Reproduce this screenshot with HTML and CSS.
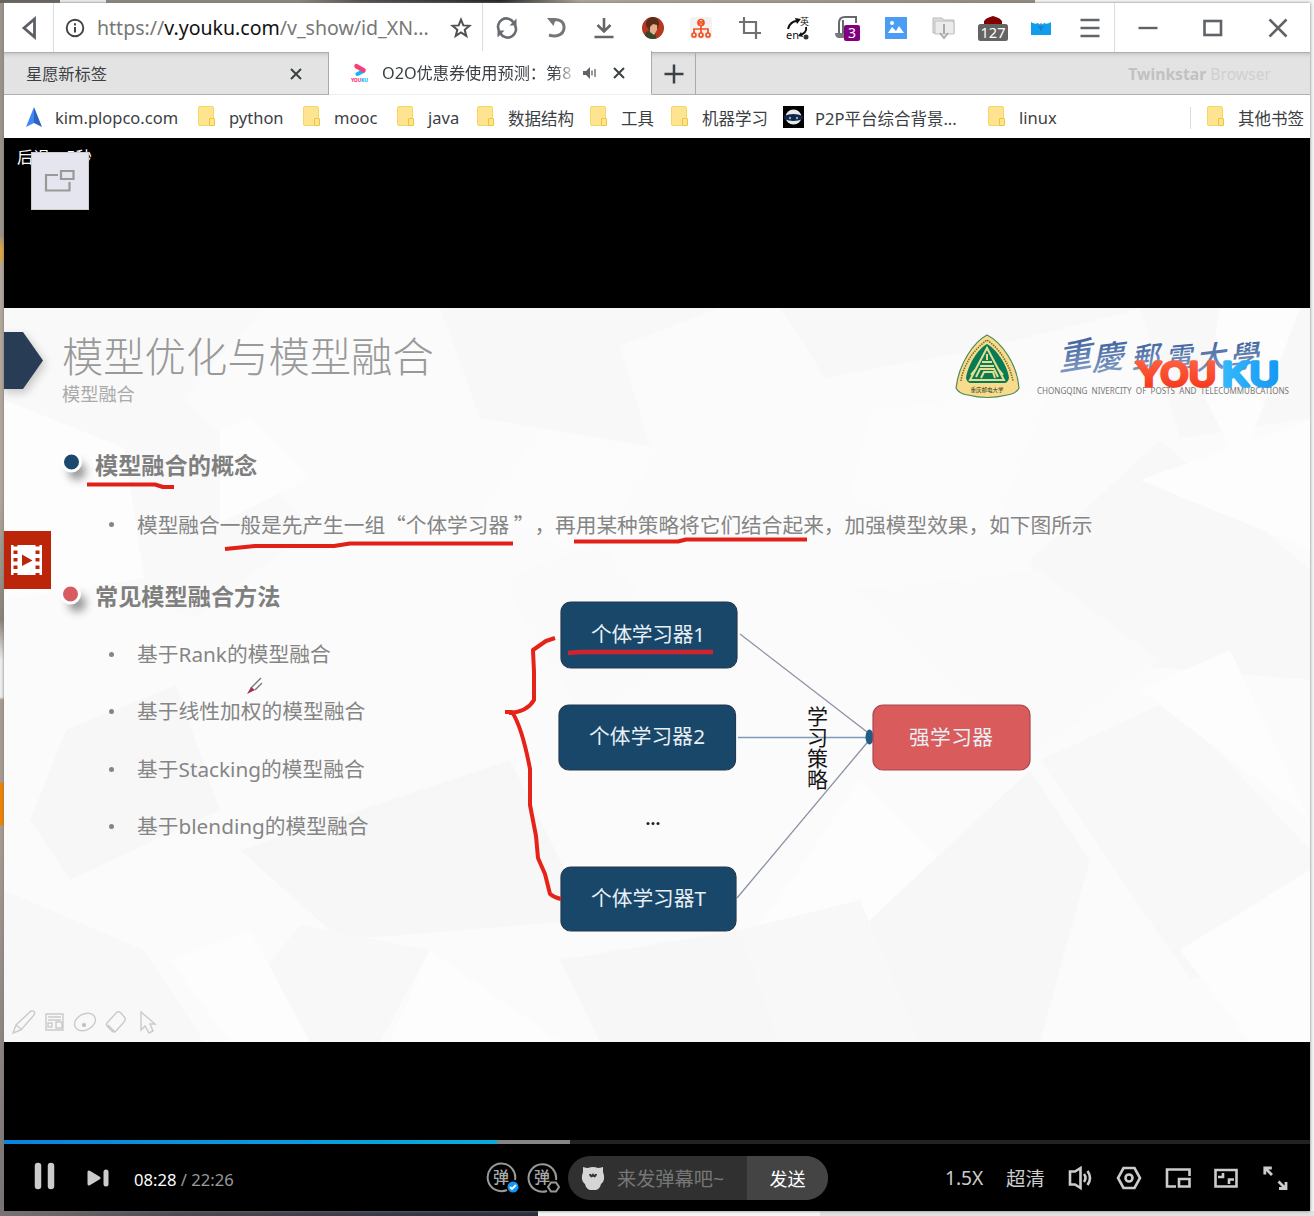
FILE: index.html
```html
<!DOCTYPE html>
<html lang="zh-CN">
<head>
<meta charset="utf-8">
<title>O2O优惠券使用预测</title>
<link rel="stylesheet" href="styles.css">
</head>
<body>
<div class="window">
  <header class="toolbar">
    <div class="back"><svg width="24" height="24" viewBox="0 0 24 24"><path d="M17.500 3V21L7 12Z" fill="none" stroke="#5b5f66" stroke-width="2.800"/></svg></div>
    <div class="address">
      <svg class="info" width="20" height="20" viewBox="0 0 20 20"><circle cx="10" cy="10" r="8.300" fill="none" stroke="#444" stroke-width="1.900"/><path d="M10 9v5.500M10 5.200v2.200" stroke="#444" stroke-width="2"/></svg>
      <span class="url">https://<b>v.youku.com</b>/v_show/id_XN...</span>
      <svg class="star" width="22" height="22" viewBox="0 0 22 22"><path d="M11 2.600l2.300 5.800 6.200.4-4.800 4 1.600 6.100-5.300-3.400-5.300 3.400 1.600-6.100-4.800-4 6.200-.4z" fill="none" stroke="#505050" stroke-width="2"/></svg>
    </div>
    <nav class="tools">
      <i><svg width="24" height="24" viewBox="0 0 24 24" fill="none" stroke="#686c70" stroke-width="2.600"><path d="M4.200 15A8.300 8.300 0 0 1 18.500 6.500M19.800 9A8.300 8.300 0 0 1 5.500 17.500"/><path d="M2 10.500l3 7 5-5zM22 13.500l-3-7-5 5z" fill="#686c70" stroke="none" transform="translate(-1 1) scale(.7)" opacity="0"/><path d="M14.500 9.500h7V2.500zM9.500 14.500h-7v7z" fill="#686c70" stroke="none"/></svg></i>
      <i><svg width="24" height="24" viewBox="0 0 24 24" fill="none" stroke="#74777a" stroke-width="3"><path d="M8 4.500c8-2.500 12.500 2 12 8-.8 6.500-8 9-15 6.500"/><path d="M3 2h9l-2.500 8z" fill="#74777a" stroke="none"/></svg></i>
      <i><svg width="24" height="24" viewBox="0 0 24 24" fill="none" stroke="#666" stroke-width="2.600"><path d="M12 2v13M5.500 9l6.500 6.500L18.500 9M2.500 21h19"/></svg></i>
      <i><svg width="24" height="24" viewBox="0 0 24 24"><defs><clipPath id="avatar"><circle cx="12" cy="12" r="11"/></clipPath></defs><g clip-path="url(#avatar)"><path fill="#b73720" d="M0 0h24v24H0z"/><path fill="#36482b" d="M2 24l3-8 5-2 4 3 2 7z"/><path fill="#e2b18d" d="M8 7h8v7l-3 5-4-3z"/><path fill="#5b2d19" d="M5 10c-1-12 14-12 13-1l-2 4V9l-4-1-3 3v4z"/></g></svg></i>
      <i><svg width="24" height="24" viewBox="0 0 24 24"><rect x="1" y="1" width="22" height="22" rx="3" fill="#f2f2f2"/><g fill="none" stroke="#f4511e" stroke-width="1.700"><circle cx="12" cy="6.500" r="3"/><path d="M9 5l6 3M15 5L9 8M12 9.500V17M5 17v-4h14v4"/><circle cx="5" cy="19" r="2"/><circle cx="12" cy="19" r="2"/><circle cx="19" cy="19" r="2"/></g></svg></i>
      <i><svg width="24" height="24" viewBox="0 0 24 24" fill="none" stroke="#6f7275" stroke-width="2.200"><path d="M1 6h17v17M6 1v16h17"/></svg></i>
      <i><svg width="26" height="26" viewBox="0 0 26 26"><path d="M3 14c1-5 5-8 9-8M21 12c1 4-2 7-6 8" fill="none" stroke="#111" stroke-width="2"/><path d="M10 3l6 1-4 5zM16 17l-3 4 5 1z" fill="#111"/><circle cx="21" cy="22" r="2.500" fill="#333"/><text x="1" y="24" class="mini-en">en</text><text x="15" y="10" class="mini-cn">英</text></svg></i>
      <i><svg width="28" height="28" viewBox="0 0 28 28"><path d="M6 22V9q0-6 6-6h11v6M10 6v14M12 3h11" fill="none" stroke="#66696c" stroke-width="2"/><path d="M2 19h9v5H5q-3-1-3-5z" fill="#77797b"/><rect x="11" y="11" width="16" height="16" rx="2" fill="#800080"/><text x="19" y="24.200" class="badge-three">3</text></svg></i>
      <i><svg width="24" height="24" viewBox="0 0 24 24"><path fill="#4a9cf5" d="M1 1h22v22H1z"/><path d="M4 17l4-6 4 4 3-5 5 7z" fill="#fff"/><circle cx="8" cy="7" r="2" fill="#fff"/></svg></i>
      <i><svg width="24" height="24" viewBox="0 0 24 24"><path d="M1 2h9l2 2h10v13H1z" fill="#dedede" stroke="#b8b8b8"/><path d="M3 5h17l2 2v11H3z" fill="#ebebeb" stroke="#c0c0c0"/><path d="M12 8v10M8 17l4 5 4-5" fill="none" stroke="#aaa" stroke-width="2"/></svg></i>
      <i><svg width="32" height="28" viewBox="0 0 32 28"><path d="M7 10V7q2-3 6-4l3-1 3 1q4 1 6 4v3z" fill="#820000"/><rect x="1" y="10" width="30" height="17" rx="2.500" fill="#646464"/><text x="16" y="24" class="badge-count">127</text></svg></i>
      <i><svg width="22" height="22" viewBox="0 0 22 22"><path d="M1 5q4 3 7 1 3 3 6 0 3 2 7-1v13H1z" fill="#109deb"/><path d="M11 6v8M8 9l3 3 3-3" fill="none" stroke="#2272b0"/></svg></i>
      <i><svg width="22" height="22" viewBox="0 0 22 22"><path d="M1.500 3h19M1.500 11h19M1.500 19h19" stroke="#626569" stroke-width="2.300"/></svg></i>
    </nav>
    <div class="controls-win">
      <i><svg width="22" height="22" viewBox="0 0 22 22"><path d="M1.500 11h19" stroke="#5f6368" stroke-width="2.400"/></svg></i>
      <i><svg width="22" height="22" viewBox="0 0 22 22"><rect x="2.500" y="4" width="16.500" height="14" fill="none" stroke="#5f6368" stroke-width="2.600"/></svg></i>
      <i><svg width="22" height="22" viewBox="0 0 22 22"><path d="M2.500 2.500l17 17M19.500 2.500l-17 17" stroke="#5f6368" stroke-width="2.500"/></svg></i>
    </div>
  </header>

  <div class="tabs">
    <div class="tab"><span>星愿新标签</span><svg width="14" height="14" viewBox="0 0 14 14"><path d="M2 2l10 10M12 2L2 12" stroke="#3c4043" stroke-width="2"/></svg></div>
    <div class="tab active">
      <svg class="fav" width="18" height="20" viewBox="0 0 18 20"><path d="M12.500 8l-6 3" stroke="#10b7f5" stroke-width="4" stroke-linecap="round"/><path d="M5.500 3.200l7 4" stroke="#ff3b78" stroke-width="4.500" stroke-linecap="round"/><text x="0" y="19" class="fav-text" textLength="17">YOU<tspan fill="#10b7f5">KU</tspan></text></svg>
      <span class="tab-title">O2O优惠券使用预测：第8</span>
      <svg class="sound" width="16" height="14" viewBox="0 0 16 14"><path d="M1 5h3l4-4v12L4 9H1z" fill="#5f6368"/><path d="M10 4.500v5M13 3v8" stroke="#5f6368" stroke-width="1.300"/></svg>
      <svg width="14" height="14" viewBox="0 0 14 14"><path d="M2 2l10 10M12 2L2 12" stroke="#3c4043" stroke-width="2"/></svg>
    </div>
    <div class="newtab"><svg width="20" height="20" viewBox="0 0 20 20"><path d="M10 .5v19M.5 10h19" stroke="#3c4043" stroke-width="2.500"/></svg></div>
    <div class="brand"><b>Twinkstar</b> Browser</div>
  </div>

  <nav class="bookmarks">
    <a style="width:143px"><svg class="bm" width="18" height="20" viewBox="0 0 18 20"><path d="M9 0l8 20-8-4z" fill="#2d64c0"/><path d="M9 0L1 20l8-4z" fill="#3f87f5"/></svg>kim.plopco.com</a>
    <a class="folder" style="width:75px"><s></s>python</a>
    <a class="folder" style="width:64px"><s></s>mooc</a>
    <a class="folder" style="width:50px"><s></s>java</a>
    <a class="folder" style="width:83px"><s></s>数据结构</a>
    <a class="folder" style="width:51px"><s></s>工具</a>
    <a class="folder" style="width:82px"><s></s>机器学习</a>
    <a class="robot" style="width:175px"><svg class="bm" width="21" height="22" viewBox="0 0 21 22"><path d="M0 0h21v22H0z" fill="#000"/><ellipse cx="10.500" cy="11" rx="8" ry="7.500" fill="#e7e9ee"/><path d="M1 10q9-4 19 0v3q-10 4-19 0z" fill="#152541"/><circle cx="7" cy="12" r="1.200" fill="#5ab5ff"/><circle cx="14" cy="12" r="1.200" fill="#5ab5ff"/></svg>P2P平台综合背景...</a>
    <a class="folder"><s></s>linux</a>
    <a class="folder other"><s></s>其他书签</a>
  </nav>

  <main class="player">
    <div class="toast">后退：5秒</div>
    <div class="popout"><svg width="32" height="24" viewBox="0 0 32 24" fill="none" stroke="#999" stroke-width="2.200"><path d="M14 6H2v15.500H25.500V13"/><path d="M17 2h12.500v8H17z"/></svg></div>
    <section class="slide">
      <svg class="facets" viewBox="4 308 1306 734">
        <path fill="#f9f9f9" d="M4 308h260l-80 90 130 130-120 90L4 540z"/>
        <path fill="#fff" d="M4 400l120 48 20 130L4 600zM220 430l30-12 60 60-90 45z"/>
        <path fill="#f7f7f7" d="M440 308l40 110 170 28-30-100 100-38zM780 308l45 70 160-30 160-40z"/>
        <path fill="#fdfdfd" d="M540 430l120 20-70 110-110-50zM870 410l180-20-60 150-140-40z"/>
        <path fill="#f6f6f6" d="M1030 560l130-120 150 130v110l-240-20zM1140 308h170v110l-130 20z"/>
        <path fill="#fff" d="M1220 308h80l-60 160-35-70zM1140 480l170-60v130z"/>
        <path fill="#f5f5f5" d="M66 730l110-45 44 125-150 70-40-60zM240 850l270-90 80 160-250 20z"/>
        <path fill="#fafafa" d="M500 580l100-40 80 110-90 80zM850 590l190-20 120 90-130 100z"/>
        <path fill="#f6f6f6" d="M4 890l140 60 60 92H4zM300 925l130 25-50 92h-70l-80-30z"/>
        <path fill="#fff" d="M430 950l130 92H390zM860 780l80 80-80 100-110-20zM170 960l80-30 60 112H230z"/>
        <path fill="#f4f4f4" d="M560 960l180-30 40 112H600zM870 920l160-150 60 90-50 182H890z"/>
        <path fill="#f7f7f7" d="M1040 760l130-60 140 150v100l-120 30zM740 930l120-30 60 142H780z"/>
        <path fill="#fff" d="M1140 690l90-40 80 170zM1180 950l130-80v172h-60z"/>
      </svg>
      <div class="slide-head">
        <h1>模型优化与模型融合</h1>
        <p>模型融合</p>
      </div>
      <h2 class="first">模型融合的概念</h2>
      <ul class="concept"><li>模型融合一般是先产生一组“个体学习器 ”，再用某种策略将它们结合起来，加强模型效果，如下图所示</li></ul>
      <h2 class="second">常见模型融合方法</h2>
      <ul><li>基于Rank的模型融合</li><li>基于线性加权的模型融合</li><li>基于Stacking的模型融合</li><li>基于blending的模型融合</li></ul>

      <svg class="canvas" viewBox="4 308 1306 734">
        <defs>
          <linearGradient id="ink" x2="0" y2="1"><stop stop-color="#2f5596"/><stop offset="1" stop-color="#8ba3c8"/></linearGradient>
          <linearGradient id="red" x2="0" y2="1"><stop stop-color="#ff6a48"/><stop offset="1" stop-color="#f53016"/></linearGradient>
          <linearGradient id="blue" x2="1" y2="0"><stop stop-color="#35b9fa"/><stop offset="1" stop-color="#1598f4"/></linearGradient>
          <filter id="soft" x="-50%" y="-50%" width="200%" height="200%"><feGaussianBlur stdDeviation="4"/></filter>
        </defs>
        <path d="M4 336h22l20 28-20 29H4z" fill="#999" opacity=".5" filter="url(#soft)"/>
        <path d="M4 332h19l20 28.500L23 389H4z" fill="#293c55"/>
        <g filter="url(#soft)" fill="#555" opacity=".6"><ellipse cx="77" cy="471" rx="9" ry="9"/><ellipse cx="77" cy="603" rx="9" ry="9"/></g>
        <circle cx="71.500" cy="462" r="9" fill="#1b486c" stroke="#fff" stroke-width="3"/>
        <circle cx="70.500" cy="594" r="9" fill="#d95b61" stroke="#fff" stroke-width="3"/>

        <g>
          <path d="M987 335C974 342 959 363 956 388q3 6 12 7 19 5 39 0 9-1 12-7C1017 363 1001 342 987 335z" fill="#f6dc8c" stroke="#4d8b52" stroke-width="1.200"/>
          <path d="M987 344c-9 5-19 20-21 34q1 5 5 5h33q4 0 5-5c-2-14-13-29-22-34z" fill="#087a54"/>
          <path d="M961 381c2-15 12-31 26-41 14 10 23 26 26 41" fill="none" stroke="#7b6a37" stroke-width="1.600" stroke-dasharray="1.500 1"/>
          <path d="M987 348l-17 32h34zM987 354v6M980 366h14M982 362h10M976 377l4-8h14l4 8M981 378l3-6h9l2 6M971 375l5-6M1003 375l-5-6" fill="none" stroke="#e6dd92" stroke-width="2"/>
          <text x="987" y="391.500" class="seal-text">重庆邮电大学</text>
        </g>
        <g class="calligraphy" fill="url(#ink)">
          <text transform="translate(1059 371) rotate(-9) skewX(-18)" font-size="34">重</text>
          <text transform="translate(1092 371) rotate(-7) skewX(-18)" font-size="32">慶</text>
          <text transform="translate(1132 369) rotate(-7) skewX(-16)" font-size="28">郵</text>
          <text transform="translate(1166 368) rotate(-5) skewX(-14)" font-size="27">電</text>
          <text transform="translate(1196 370) rotate(-7) skewX(-18)" font-size="30">大</text>
          <text transform="translate(1230 369) rotate(-6) skewX(-14)" font-size="30">學</text>
        </g>
        <text x="1037" y="394" class="university" textLength="252" lengthAdjust="spacingAndGlyphs" xml:space="preserve">CHONGQING  NIVERCITY  OF  POSTS  AND  TELECOMMUBCATIONS</text>
        <g class="youku"><text x="1136" y="386" textLength="80" lengthAdjust="spacingAndGlyphs" fill="url(#red)" stroke="url(#red)">YOU</text><text x="1222" y="386" textLength="57" lengthAdjust="spacingAndGlyphs" fill="url(#blue)" stroke="url(#blue)">KU</text></g>

        <g fill="none" stroke="#8a91a4" stroke-width="1.300"><path d="M740 634l131 101"/><path d="M738 737.500h131" stroke="#7e9ab8"/><path d="M737 898l134-160"/></g>
        <ellipse cx="869.500" cy="737" rx="4" ry="7.500" fill="#225b86"/>
        <g fill="#19476a" stroke="#24394f" stroke-width="1.200"><rect x="561" y="602" width="176" height="66" rx="10"/><rect x="559" y="705" width="176.500" height="65" rx="10"/><rect x="561" y="867" width="175" height="64" rx="10"/></g>
        <rect x="873" y="705" width="157" height="65" rx="10" fill="#da5b5b" stroke="#a74850" stroke-width="1.200"/>
        <g class="node"><text x="591" y="642" textLength="114">个体学习器1</text><text x="589" y="744" textLength="116">个体学习器2</text><text x="591" y="906" textLength="115">个体学习器T</text><text x="909" y="744.500" textLength="84">强学习器</text></g>
        <g class="vertical"><text x="807" y="724">学</text><text x="807" y="745">习</text><text x="807" y="765.500">策</text><text x="807" y="786.500">略</text></g>
        <g fill="#222"><circle cx="648" cy="823.500" r="1.500"/><circle cx="653" cy="823.500" r="1.500"/><circle cx="658" cy="823.500" r="1.500"/></g>

        <g fill="none" stroke="#e12018" stroke-width="4" stroke-linejoin="round">
          <path d="M87 484.500h68l8 2.500h11"/>
          <path d="M225 549l15-1.500 15-1.500h79l16-2.500h163"/>
          <path d="M574 541.500h104l8-2h121"/>
          <path d="M568 653l12-1h133" stroke="#cf2430" stroke-width="4.500"/>
          <path d="M555 638l-9 3-13 9 1 22v28q-7 12-25 13M505 712h7q10 15 18 57v36l6 31 2 22 7 16 5 20q5 4 11 5" stroke="#e62318"/>
        </g>
        <path d="M251 688l10-10M255 690l7-7" fill="none" stroke="#777" stroke-width="1.400"/><path d="M247 694l4-7 4 3z" fill="#a72e4c"/>
        <g fill="none" stroke="#cacaca" stroke-width="1.400"><path d="M13 1033l3-8 15-14q5-1 3 4l-13 15zM16 1025l5 4"/><path d="M46 1014h17v16H46zM48 1017h13M48 1020h13M48 1023h4v4h-4zM56 1022h6v6h-6z"/><ellipse cx="85" cy="1022" rx="11" ry="8" transform="rotate(-27 85 1022)"/><circle cx="84" cy="1025" r="1.500" fill="#aaa"/><path d="M107 1023l10-11q2-1 4 1l4 5q1 2-1 4l-8 9q-2 2-4 0l-5-5q-1-2 0-3zM108 1025l7 7"/><path d="M141 1012v18l4-4 4 7 4-2-3-7h5z"/></g>
      </svg>
    </section>
    <div class="video-side"><svg width="31" height="30" viewBox="0 0 31 30"><path d="M0 0h31v30H0z" fill="#fff"/><path d="M11 9.500l10.500 6L11 21z" fill="#bd250b"/><path d="M4.500 -2v32M26.500 -2v32" stroke="#bd250b" stroke-width="4" stroke-dasharray="3.500 4"/></svg></div>
    <footer class="bar">
      <div class="progress"><div class="buffered" style="width:566px"></div><div class="played" style="width:493px"></div></div>
      <div class="buttons">
        <svg class="pause" width="22" height="28" viewBox="0 0 22 28"><path d="M5 4v20M18 4v20" stroke="#ccc" stroke-width="6.500" stroke-linecap="round"/></svg>
        <svg class="next" width="24" height="20" viewBox="0 0 24 20"><path d="M3 4v12l10-6z" fill="#ccc" stroke="#ccc" stroke-width="3" stroke-linejoin="round"/><path d="M20 4v12" stroke="#ccc" stroke-width="5" stroke-linecap="round"/></svg>
        <span class="time"><b>08:28</b> / 22:26</span>
        <svg class="dan" width="34" height="34" viewBox="0 0 34 34"><path d="M29 19A13.800 13.800 0 1 0 21 29" fill="none" stroke="#999" stroke-width="2"/><text x="15" y="22" class="dan-text">弹</text><circle cx="27" cy="26" r="5.500" fill="#1394f7"/><path d="M24 26l2 2 4-4" fill="none" stroke="#fff" stroke-width="1.800"/></svg>
        <svg class="dan" width="34" height="34" viewBox="0 0 34 34"><path d="M29 19A13.800 13.800 0 1 0 20 30" fill="none" stroke="#999" stroke-width="2"/><text x="15" y="22" class="dan-text">弹</text><path d="M24 21.500h5l3 4.500-3 4.500h-5L21 26z" fill="#000" stroke="#999" stroke-width="2"/></svg>
        <div class="comment"><svg width="24" height="26" viewBox="0 0 24 26"><path d="M2 2q3 1 5 1 5-2 10 0 2 0 5-1v5q3 8-2 12-1 5-5 6h-6q-4-1-5-6-5-4-2-12z" fill="#d5d5d5"/><path d="M9 9q1 4 3 1 2 3 3-1" fill="none" stroke="#333" stroke-width="2.200"/></svg><span>来发弹幕吧~</span><b>发送</b></div>
        <span class="speed">1.5X</span><span class="quality">超清</span>
        <div class="player-tools">
          <svg width="26" height="26" viewBox="0 0 26 26"><path d="M3 6.500h5L13.500 3v20L8 19.500H3z"/><path d="M17 9q3 4 0 8M20.500 6q5 7 0 14"/></svg>
          <svg width="26" height="26" viewBox="0 0 26 26"><path d="M7.500 3h11L24 13l-5.500 10h-11L2 13z"/><circle cx="13" cy="13" r="3.500"/></svg>
          <svg width="26" height="26" viewBox="0 0 26 26"><path d="M24.500 11V4.500H2v17h9M14 14h10.500v7.500H14z"/></svg>
          <svg width="26" height="26" viewBox="0 0 26 26"><path d="M2.500 5h21v16.500h-21zM5 12h5V8M21 14.500h-5v4.500"/></svg>
          <svg width="26" height="26" viewBox="0 0 26 26"><path d="M10 10L4 4M2.800 9.500V3h7M16.500 16.500l6 6M24 17v6.500h-7" stroke-width="2.800"/></svg>
        </div>
      </div>
    </footer>
  </main>
</div>
</body>
</html>
```

FILE: styles.css
```css
* { box-sizing: border-box; }
body {
  margin: 0; width: 1314px; height: 1216px; overflow: hidden; padding: 3px 4px 5px;
  font-family: "Noto Sans", "Noto Sans CJK SC", sans-serif; color: #3c4043;
  background:
    linear-gradient(90deg, #69635d 0 60px, #eee 60px 106px, #8c857d 106px 300px, #554f4c 360px, #222 500px, #b0a797 580px, #938b7e 1035px, #f6f6f6 1035px) 0 0 / 100% 3px no-repeat,
    linear-gradient(90deg, #787273 0, #4a4951 180px, #292d3a 538px, #f5f5f5 538px 820px, #e2e2e2 820px) 0 100% / 100% 5px no-repeat,
    linear-gradient(#9c938b 0 235px, #dda640 248px 258px, #b1a79b 265px 500px, #8b8178 620px, #eee 660px 697px, #a79c92 700px 782px, #f28300 783px 825px, #a99d92 826px, #777173) 0 0 / 4px 100% no-repeat,
    #f4f4f4;
}
.window { width: 1306px; height: 1208px; background: #fff; display: flex; flex-direction: column; box-shadow: 0 0 3px #777; }
svg { flex: none; }
i, .toolbar, .back, .address, .tools, .controls-win, .tabs, .tab, .bookmarks, .bookmarks a { display: flex; align-items: center; }
i { flex: 1; justify-content: center; font-style: normal; min-width: 0; }
.toolbar { height: 49px; }
.back { width: 50px; height: 100%; justify-content: center; border-right: 1px solid #ddd; }
.address { width: 429px; height: 100%; border-right: 1px solid #ddd; padding: 0 10px 0 11px; }
.url { margin-left: 12px; flex: 1; font-size: 19.550px; color: #777; white-space: nowrap; }
.url b { color: #111; font-weight: 400; }
.tools { flex: 1; height: 100%; border-right: 1px solid #ddd; }
.controls-win { width: 195px; }
.mini-en { font-size: 11px; fill: #111; }
.mini-cn { font-size: 9px; fill: #111; }
.badge-three { font-size: 14px; fill: #fff; text-anchor: middle; }
.badge-count { font-size: 14.500px; fill: #fff; text-anchor: middle; }

.tabs { height: 43px; background: #e3e3e3; border-top: 1px solid #b0b0b0; border-bottom: 1px solid #b0b0b0; box-shadow: inset 0 4px 4px -3px #bbb; }
.tab { width: 325px; height: 43px; border-right: 1px solid #aaa; padding: 0 25px 0 22px; justify-content: space-between; font-size: 16.200px; flex: none; }
.tab > span { position: relative; top: -1px; }
.tab.active { width: 323px; background: #fff; padding: 0 24px 0 22px; margin-top: -1px; justify-content: flex-start; border-bottom: 1px solid #eee; height: 44px; }
.tab-title { width: 191px; margin-left: 13px; white-space: nowrap; overflow: hidden; -webkit-mask-image: linear-gradient(90deg, #000 172px, #0004 190px); }
.sound { margin: 0 14px 0 9px; }
.fav-text { font: 800 5px "Noto Sans", sans-serif; fill: #ff3b78; }
.newtab { width: 44px; height: 42px; border-right: 1px solid #aaa; display: flex; align-items: center; justify-content: center; }
.brand { margin-left: auto; margin-right: 39px; font-size: 15.700px; color: #d0d0d0; }
.brand b { color: #c1c1c1; }

.bookmarks { height: 43px; font-size: 16.500px; padding-left: 21px; white-space: nowrap; padding-top: 2px; }
.bookmarks a { height: 30px; margin-right: 30px; flex: none; }
.bm { margin-right: 12px; margin-top: -2px; }
.robot .bm { margin-right: 11px; }
.bookmarks s { flex: none; width: 16px; height: 20px; margin-top: -3px; margin-right: 15px; background: #fee491; border: 1px solid #f7d761; border-radius: 2px; position: relative; }
.bookmarks s::after { content: ""; position: absolute; right: -2px; bottom: -1px; width: 4px; height: 6px; background: #fee491; border: 1px solid #efc63a; border-radius: 1px; }
.bookmarks .other { margin-left: auto; margin-right: 6px; border-left: 1px solid #ddd; padding-left: 16px; height: 22px; }

.player { height: 1073px; background: #000; position: relative; display: flex; flex-direction: column; }
.toast { position: absolute; left: 13px; top: 8px; font-size: 16.400px; line-height: 22px; color: #fff; }
.popout { position: absolute; left: 27px; top: 14px; width: 58px; height: 58px; background: #e5e5ef; border: 1px solid #ccc; display: flex; align-items: center; justify-content: center; }
.slide { margin-top: 170px; height: 734px; background: #fbfbfb; position: relative; color: #858585; }
.facets, .canvas { position: absolute; inset: 0; width: 1306px; height: 734px; }
.facets { opacity: .5; }
.slide-head, .slide h2, .slide ul { position: relative; }
.slide-head { padding: 18px 0 0 58px; }
.slide h1 { margin: 0; font-size: 41.300px; line-height: 60px; font-weight: 300; color: #999; }
.slide-head p { margin: 0; font-size: 18.200px; line-height: 16px; color: #aaa; }
.slide h2 { margin: 0 0 0 91px; font-size: 23.200px; line-height: 30px; color: #7f7f7f; }
.slide h2.first { margin-top: 48px; }
.slide h2.second { margin-top: 27px; }
.slide ul { list-style: none; margin: 0; padding: 16px 0 0 107px; font-size: 20.750px; line-height: 57.500px; white-space: nowrap; }
.slide h2.second + ul { padding-top: 15px; }
.slide li { display: flex; align-items: center; height: 57.500px; }
.slide li::before { content: ""; width: 5px; height: 5px; border-radius: 50%; background: #858585; margin-right: 23px; margin-left: -2px; }
.slide ul.concept { font-family: "Noto Sans CJK SC", sans-serif; text-spacing-trim: space-all; font-size: 20.680px; }
.seal-text { font-size: 5.500px; text-anchor: middle; fill: #26331c; }
.calligraphy { font-family: "Noto Sans CJK TC", sans-serif; font-weight: 500; }
.university { font: 9px "Noto Sans", sans-serif; fill: #777; }
.youku { font: 500 33px "Inter", sans-serif; stroke-width: 3.5px; stroke-linejoin: round; }
.node { font-size: 20.700px; fill: #e8eff5; }
.vertical { font-size: 21px; fill: #151515; }

.video-side { position: absolute; left: 0; top: 393px; width: 47px; height: 58px; background: #bd250b; display: flex; align-items: center; padding-left: 7px; }
.bar { margin-top: 98px; height: 71px; }
.progress { height: 4px; background: #222; display: grid; }
.buffered, .played { grid-area: 1 / 1; height: 4px; }
.buffered { background: #858585; }
.played { background: linear-gradient(90deg, #0a83dd, #08addc); }
.buttons { display: flex; align-items: center; height: 67px; color: #ccc; }
.pause { margin-left: 29px; margin-top: -3px; }
.next { margin-left: 31px; }
.time { margin-left: 24px; width: 352px; font-size: 16.600px; color: #999; margin-top: 4px; flex: none; }
.time b { color: #fff; font-weight: 400; }
.dan { margin-right: 7px; }
.dan-text { font-size: 16px; font-weight: 500; fill: #aaa; text-anchor: middle; }
.comment { margin-left: 0; width: 260px; height: 44px; border-radius: 22px; overflow: hidden; background: #303030; display: flex; align-items: center; padding-left: 13px; flex: none; }
.comment span { margin-left: 12px; font-size: 19.200px; color: #777; flex: 1; white-space: nowrap; }
.comment b { width: 81px; height: 44px; background: #444; color: #fff; font-size: 18px; font-weight: 400; display: flex; align-items: center; justify-content: center; }
.speed { margin-left: 117px; width: 61px; font-size: 19.200px; flex: none; }
.quality { width: 61px; font-size: 19.400px; white-space: nowrap; flex: none; }
.player-tools { display: flex; gap: 22.800px; fill: none; stroke: #ccc; stroke-width: 2.600; }
```
